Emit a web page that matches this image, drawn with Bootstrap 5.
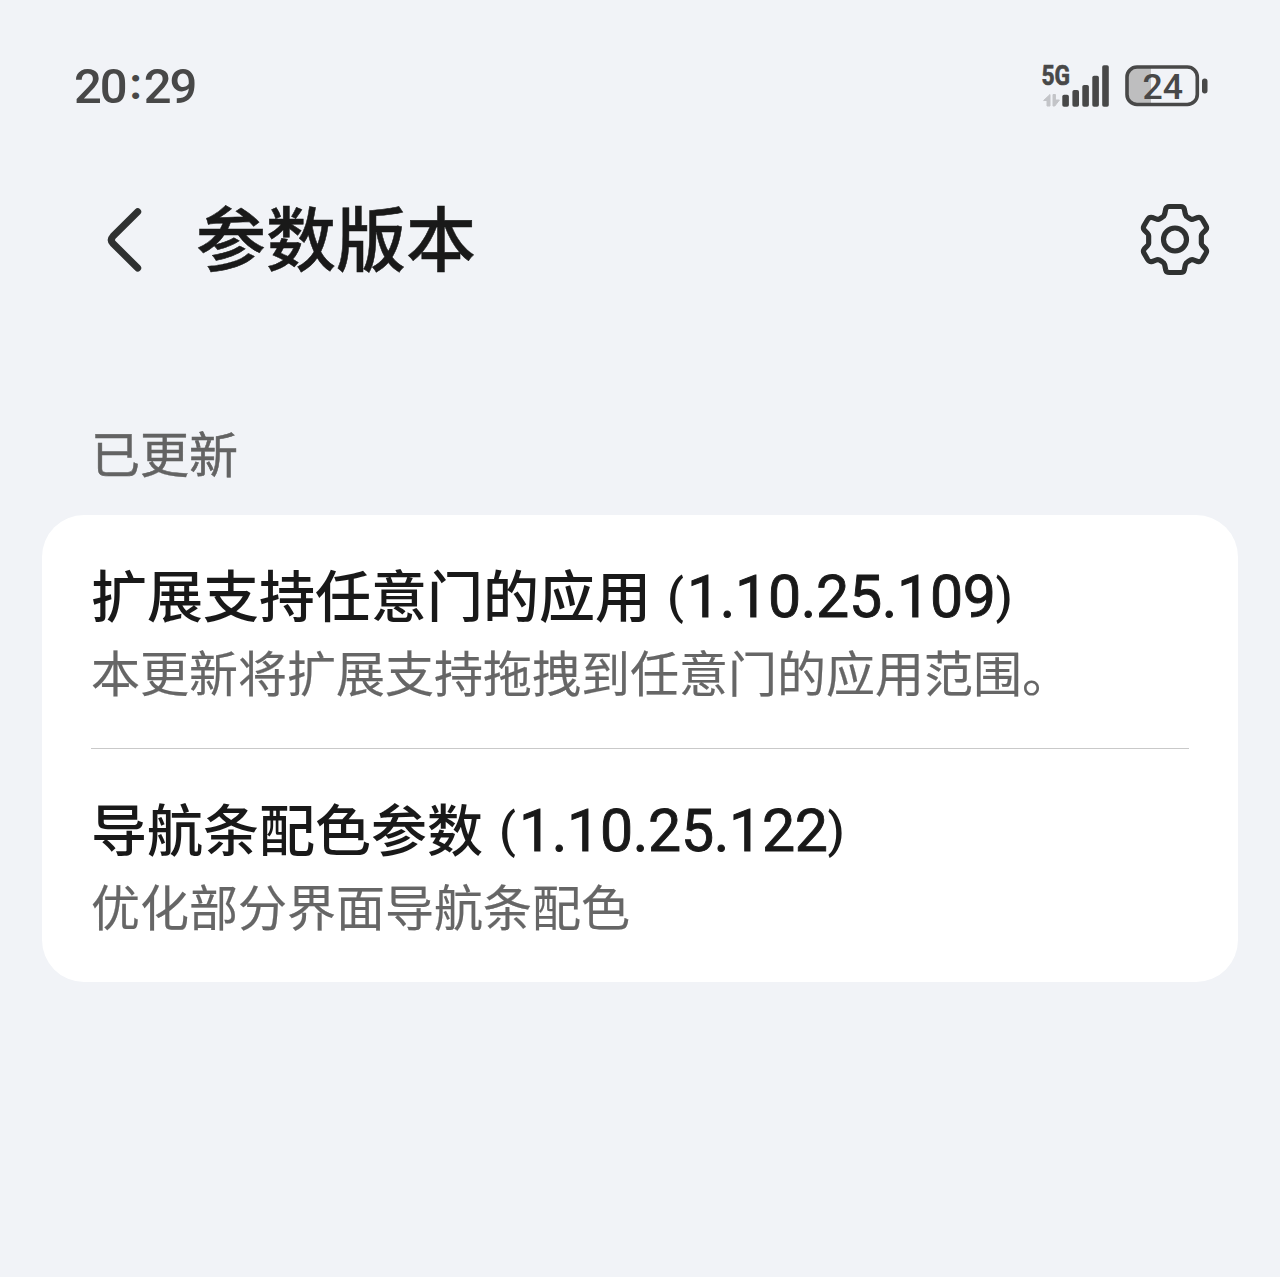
<!DOCTYPE html>
<html lang="zh-CN">
<head>
<meta charset="utf-8">
<meta name="viewport" content="width=device-width, initial-scale=1">
<title>参数版本</title>
<link href="https://cdn.jsdelivr.net/npm/bootstrap@5.3.0/dist/css/bootstrap.min.css" rel="stylesheet">
<style>
  body { background: #f1f3f7; color: #191919; font-family: "Noto Sans CJK SC", sans-serif; min-height: 1277px; }
  svg { display: block; }
  .status-bar { height: 60px; margin-top: 56px; padding: 0 72px 0 74px; color: #484848; }
  .clock { font: 500 49px/60px Roboto, sans-serif; letter-spacing: -2.1px; padding-top: 2px; }
  .clock-sep { margin: 0 4px 0 4px; font-size: 44px; font-weight: 700; line-height: 1; vertical-align: 4px; }
  .top-bar { height: 104px; margin-top: 71px; padding: 0 70px 0 107px; }
  .back-icon { margin-top: 2px; }
  .page-title { font-size: 70px; line-height: 96px; font-weight: 500; margin: -6px 0 0 53px; -webkit-text-stroke: .5px currentColor; }
  .group-label { font-size: 49px; line-height: 64px; color: #636363; margin-top: 129px; padding-left: 91px; -webkit-text-stroke: .5px currentColor; }
  .update-list { margin: 31px 42px 0; border-radius: 42px; padding: 0 49px; }
  .update-item { padding: 42px 0 45px; gap: 10px; }
  .update-item + .update-item { border-top: 1px solid #c9c9c9; }
  .update-name { font-size: 56px; line-height: 72px; height: 72px; font-weight: 500; white-space: nowrap; }
  .version { font: 400 59px/1 Roboto, sans-serif; letter-spacing: -.3px; margin-left: 16px; -webkit-text-stroke: .9px currentColor; }
  .paren { font-size: 49px; font-weight: 500; line-height: 1; vertical-align: 4px; letter-spacing: 3px; -webkit-text-stroke: 0; }
  .update-desc { font-size: 49px; line-height: 64px; color: #666; white-space: nowrap; -webkit-text-stroke: .2px currentColor; }
</style>
</head>
<body>
  <header>
    <div class="status-bar d-flex justify-content-between align-items-center">
      <span class="clock">20<span class="clock-sep">:</span>29</span>
      <svg width="168" height="60" viewBox="1040 56 168 60" fill="#484848" font-family="Roboto, sans-serif">
        <text x="1041.5" y="85.3" font-size="27" font-weight="700" textLength="28.5" lengthAdjust="spacingAndGlyphs" stroke="#484848" stroke-width=".7">5G</text>
        <path fill="#c3c4c8" stroke="#c3c4c8" stroke-linejoin="round" d="M1050 94.5v11.5h-3v-5.5h-3.4zM1053 94.5h2.4v5.5h4l-4.6 6h-1.8z"/>
        <rect x="1062.3" y="94.7" width="6.6" height="12" rx="1.8"/>
        <rect x="1072.4" y="90" width="6.6" height="16.7" rx="1.8"/>
        <rect x="1082.3" y="85" width="6.6" height="21.7" rx="1.8"/>
        <rect x="1092.3" y="75.8" width="6.6" height="30.9" rx="1.8"/>
        <rect x="1102.2" y="65.2" width="6.6" height="41.5" rx="1.8"/>
        <path fill="#bebebf" d="M1151 67v37h-14q-10 0-10-10V77q0-10 10-10z"/>
        <rect x="1127" y="67" width="70.3" height="37.5" rx="10" fill="none" stroke="#484848" stroke-width="3.6"/>
        <rect x="1202" y="78.5" width="5.5" height="15" rx="2.7"/>
        <text x="1142.5" y="98.5" font-size="35.7" font-weight="500" textLength="40.5">24</text>
      </svg>
    </div>
    <nav class="top-bar d-flex align-items-center">
      <svg class="back-icon" width="36" height="66" viewBox="107 207 36 66" fill="none" stroke="#2f3131" stroke-width="7" stroke-linecap="round" stroke-linejoin="round" role="img" aria-label="返回"><path d="M137.7 211.7 113 236.3Q109.6 240 113 243.5L137.7 268"/></svg>
      <h1 class="page-title">参数版本</h1>
      <svg class="ms-auto" width="70" height="73" viewBox="-105 -109.5 210 219" fill="none" stroke="#2f3131" stroke-width="15.5" stroke-linejoin="round" role="img" aria-label="设置">
        <path d="M-17-99H17Q26-99 28-91L31-76Q33-69 38-67L48-61Q52-59 57-62L68-66Q77-68 82-60L93-41Q97-34 92-28L82-18Q79-15 79-11V11Q79 15 82 18L92 28Q97 34 93 41L82 60Q77 68 68 66L57 62Q52 59 48 61L38 67Q33 69 31 76L28 91Q26 99 17 99H-17Q-26 99-28 91L-31 76Q-33 69-38 67L-48 61Q-52 59-57 62L-68 66Q-77 68-82 60L-93 41Q-97 34-92 28L-82 18Q-79 15-79 11V-11Q-79-15-82-18L-92-28Q-97-34-93-41L-82-60Q-77-68-68-66L-57-62Q-52-59-48-61L-38-67Q-33-69-31-76L-28-91Q-26-99-17-99Z"/>
        <circle r="34.5"/>
      </svg>
    </nav>
  </header>
  <main>
    <h2 class="group-label mb-0 fw-normal">已更新</h2>
    <section class="update-list bg-white">
      <article class="update-item d-flex flex-column">
        <h3 class="update-name mb-0">扩展支持任意门的应用<span class="version"><span class="paren">(</span>1.10.25.109<span class="paren">)</span></span></h3>
        <p class="update-desc mb-0">本更新将扩展支持拖拽到任意门的应用范围。</p>
      </article>
      <article class="update-item d-flex flex-column">
        <h3 class="update-name mb-0">导航条配色参数<span class="version"><span class="paren">(</span>1.10.25.122<span class="paren">)</span></span></h3>
        <p class="update-desc mb-0">优化部分界面导航条配色</p>
      </article>
    </section>
  </main>
<script src="https://cdn.jsdelivr.net/npm/bootstrap@5.3.0/dist/js/bootstrap.bundle.min.js"></script>
</body>
</html>
